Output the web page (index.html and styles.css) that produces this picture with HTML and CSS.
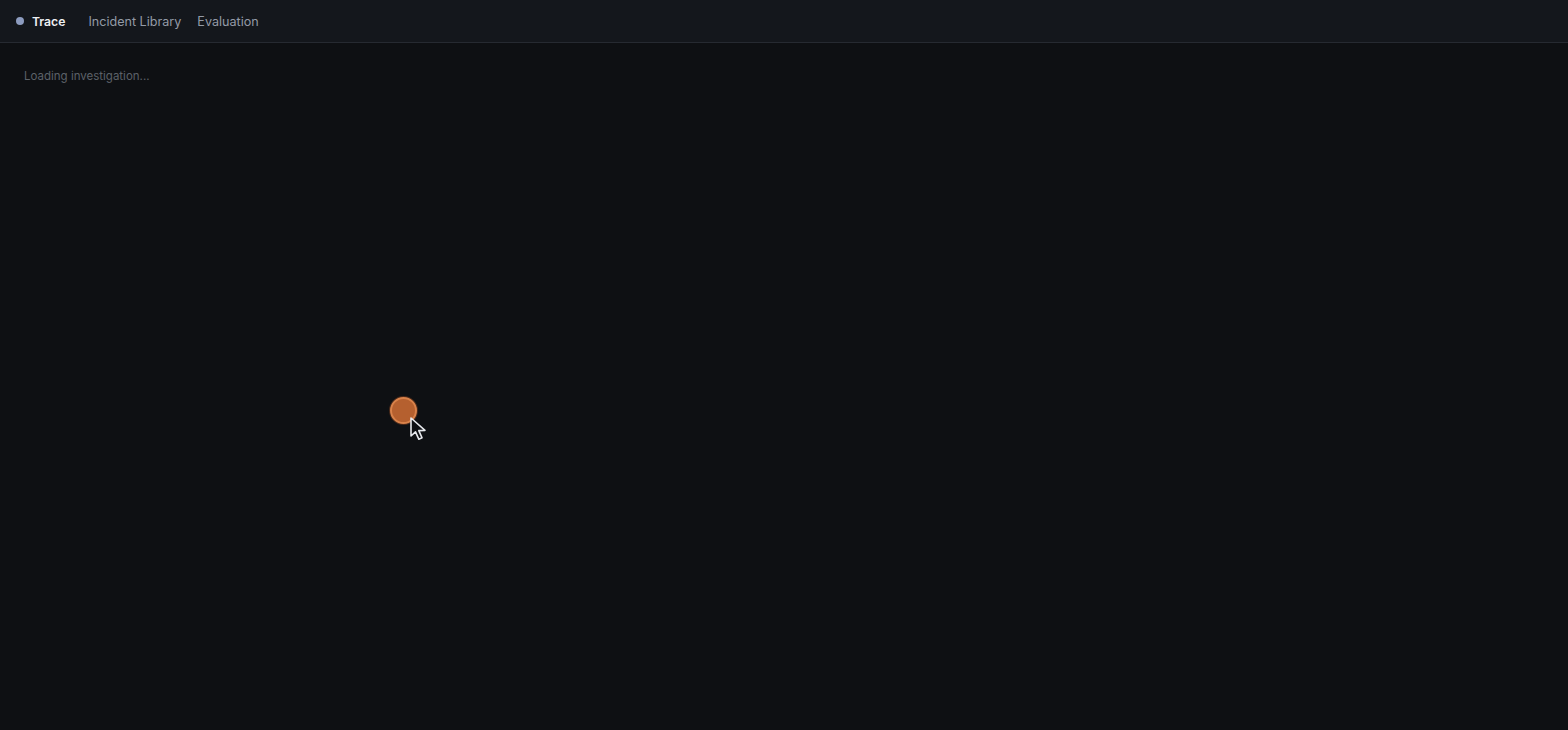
FILE: index.html
```html
<!DOCTYPE html>
<html>
<head>
<meta charset="utf-8">
<link rel="stylesheet" href="styles.css">
</head>
<body>
<header class="topbar">
  <div class="brand"><span class="dot"></span><span class="brand-name">Trace</span></div>
  <nav class="nav">
    <a class="nav-link">Incident Library</a>
    <a class="nav-link">Evaluation</a>
  </nav>
</header>
<main class="main">
  <p class="loading">Loading investigation...</p>
</main>
<div class="click-marker"></div>
<svg class="cursor" width="20" height="26" viewBox="0 0 20 26">
  <path d="M2 2 L2 20 L6.5 15.8 L9.8 23.2 L13 21.8 L9.8 14.6 L16 14.4 Z" fill="#0e1013" stroke="#e6e8ec" stroke-width="1.6" stroke-linejoin="round"/>
</svg>
</body>
</html>
```
FILE: styles.css
```css
* { box-sizing: border-box; }
html, body { margin: 0; padding: 0; }
body {
  background: #0e1013;
  font-family: Inter, "Liberation Sans", sans-serif;
  width: 1568px;
  height: 730px;
  overflow: hidden;
  position: relative;
}
.topbar {
  height: 43px;
  background: #14171c;
  border-bottom: 1px solid #262a31;
  display: flex;
  align-items: center;
  padding-left: 16px;
}
.brand {
  display: flex;
  align-items: center;
  gap: 8px;
}
.dot {
  width: 8px;
  height: 8px;
  border-radius: 50%;
  background: #8d9cbf;
}
.brand-name {
  color: #eef0f3;
  font-size: 12.2px;
  font-weight: 600;
}
.nav {
  display: flex;
  gap: 16px;
  margin-left: 23px;
}
.nav-link {
  color: #939aa6;
  font-size: 12.6px;
}
.main {
  padding: 26px 24px;
}
.loading {
  margin: 0;
  color: #5c6168;
  font-size: 11.5px;
}
.click-marker {
  position: absolute;
  left: 390px;
  top: 397px;
  width: 27px;
  height: 27px;
  border-radius: 50%;
  background: #b5602f;
  border: 2px solid #d9824a;
  box-shadow: 0 0 0 1px rgba(180, 90, 40, 0.35);
}
.cursor {
  position: absolute;
  left: 409px;
  top: 416px;
}
```
